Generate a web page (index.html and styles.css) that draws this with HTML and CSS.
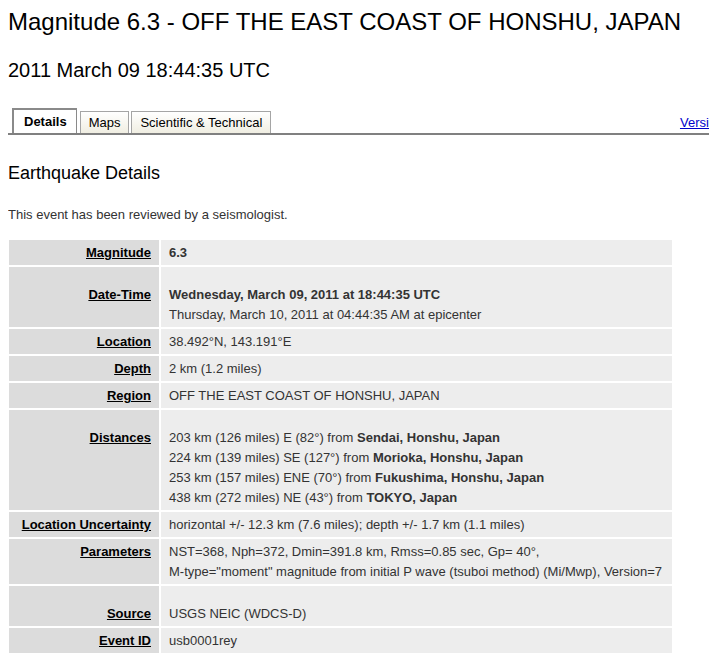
FILE: index.html
```html
<!DOCTYPE html>
<html lang="en">
<head>
    <meta charset="UTF-8">
    <title>Magnitude 6.3 - OFF THE EAST COAST OF HONSHU, JAPAN</title>
    <link rel="stylesheet" href="styles.css">
</head>
<body>
    <h1 class="title">Magnitude 6.3 - OFF THE EAST COAST OF HONSHU, JAPAN</h1>
    <h2 class="date">2011 March 09 18:44:35 UTC</h2>

    <!-- Tabs -->
    <div class="tabs">
        <a class="tab active" href="#">Details</a>
        <a class="tab" href="#">Maps</a>
        <a class="tab" href="#">Scientific &amp; Technical</a>
        <a class="lang" href="#">Versión en Español</a>
    </div>

    <h3 class="section">Earthquake Details</h3>
    <p class="note">This event has been reviewed by a seismologist.</p>

    <table class="details">
        <tr>
            <th><a href="#">Magnitude</a></th>
            <td><strong>6.3</strong></td>
        </tr>
        <tr>
            <th><a href="#">Date-Time</a></th>
            <td><div class="spaced"><strong>Wednesday, March 09, 2011 at 18:44:35 UTC</strong><br>Thursday, March 10, 2011 at 04:44:35 AM at epicenter</div></td>
        </tr>
        <tr>
            <th><a href="#">Location</a></th>
            <td>38.492°N, 143.191°E</td>
        </tr>
        <tr>
            <th><a href="#">Depth</a></th>
            <td>2 km (1.2 miles)</td>
        </tr>
        <tr>
            <th><a href="#">Region</a></th>
            <td>OFF THE EAST COAST OF HONSHU, JAPAN</td>
        </tr>
        <tr>
            <th><a href="#">Distances</a></th>
            <td><div class="spaced">203 km (126 miles) E (82°) from <strong>Sendai, Honshu, Japan</strong><br>
                224 km (139 miles) SE (127°) from <strong>Morioka, Honshu, Japan</strong><br>
                253 km (157 miles) ENE (70°) from <strong>Fukushima, Honshu, Japan</strong><br>
                438 km (272 miles) NE (43°) from <strong>TOKYO, Japan</strong></div></td>
        </tr>
        <tr>
            <th><a href="#">Location Uncertainty</a></th>
            <td>horizontal +/- 12.3 km (7.6 miles); depth +/- 1.7 km (1.1 miles)</td>
        </tr>
        <tr>
            <th><a href="#">Parameters</a></th>
            <td>NST=368, Nph=372, Dmin=391.8 km, Rmss=0.85 sec, Gp= 40°,<br>M-type="moment" magnitude from initial P wave (tsuboi method) (Mi/Mwp), Version=7</td>
        </tr>
        <tr>
            <th><a href="#">Source</a></th>
            <td><div class="spaced">USGS NEIC (WDCS-D)</div></td>
        </tr>
        <tr>
            <th><a href="#">Event ID</a></th>
            <td>usb0001rey</td>
        </tr>
    </table>
</body>
</html>
```

FILE: styles.css
```css
body {
    font-family: "Liberation Sans", Arial, sans-serif;
    margin: 8px;
    color: #000;
    background-color: #fff;
}
.title {
    font-size: 24px;
    font-weight: normal;
    white-space: nowrap;
    margin: 0;
}
.date {
    font-size: 20px;
    font-weight: normal;
    margin: 23px 0 0;
}

/* tab strip */
.tabs {
    display: flex;
    align-items: flex-end;
    margin: 26px -8px 0 -3px;
    padding-left: 7px;
    border-bottom: 2px solid #808080;
    height: 25px;
    overflow: hidden;
}
.tab {
    display: block;
    flex: none;
    font-size: 13px;
    color: #000;
    text-decoration: none;
    height: 21px;
    line-height: 22px;
    padding: 0 8px;
    margin-right: 2px;
    border: 1px solid #a5a5a5;
    border-bottom: none;
    background: linear-gradient(#ffffff, #f0eee2);
}
.tab:first-child + .tab {
    margin-left: 1px;
}
.tab.active {
    font-weight: bold;
    height: 25px;
    line-height: 24px;
    padding: 0 9px 0 10px;
    margin-bottom: -2px;
    border-top: 2px solid #8a8a8a;
    border-left: 2px solid #8a8a8a;
    border-right: 1px solid #8a8a8a;
    background: #fff;
}
.lang {
    flex: none;
    margin-left: auto;
    margin-right: -75px;
    font-size: 13px;
    line-height: 20px;
    color: #0000cc;
}

.section {
    font-size: 18px;
    font-weight: normal;
    margin: 28px 0 0;
}
.note {
    font-size: 13px;
    color: #333;
    margin: 23px 0 0;
}

/* details table */
.details {
    margin: 16px 0 0 -1px;
    width: 667px;
    border-spacing: 2px;
    font-size: 13px;
    line-height: 20px;
}
.details th,
.details td {
    box-sizing: border-box;
    padding: 3px 8px 2px;
    vertical-align: baseline;
}
.details th {
    width: 150px;
    text-align: right;
    background-color: #dcdcdc;
    white-space: nowrap;
}
.details th a {
    color: #000;
}
.details td {
    text-align: left;
    color: #333;
    background-color: #ededed;
}
.details td strong {
    color: #333;
}
.spaced {
    margin-top: 15px;
}
```
